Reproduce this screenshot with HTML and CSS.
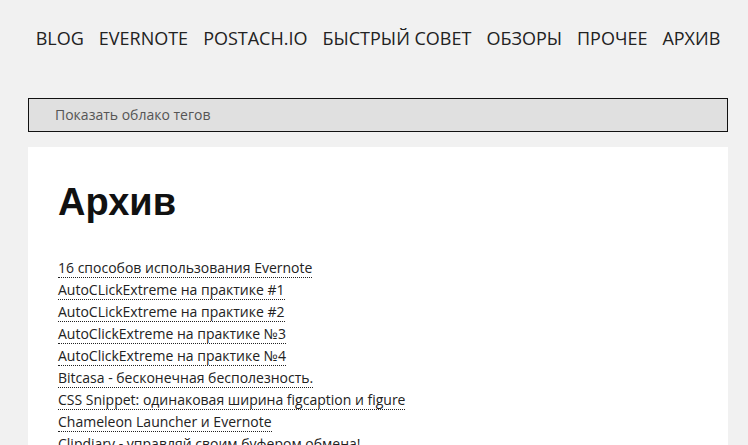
FILE: index.html
```html
<!DOCTYPE html>
<html lang="ru">
<head>
<meta charset="utf-8">
<title>Архив</title>
<link rel="stylesheet" href="styles.css">
</head>
<body>
<div class="wrap">
  <nav class="nav">
    <a href="#">BLOG</a>
    <a href="#">EVERNOTE</a>
    <a href="#">POSTACH.IO</a>
    <a href="#">БЫСТРЫЙ СОВЕТ</a>
    <a href="#">ОБЗОРЫ</a>
    <a href="#">ПРОЧЕЕ</a>
    <a href="#">АРХИВ</a>
  </nav>
  <div class="tags">Показать облако тегов</div>
  <main class="card">
    <h1 class="title">Архив</h1>
    <ul class="list">
      <li><a href="#">16 способов использования Evernote</a></li>
      <li><a href="#">AutoCLickExtreme на практике #1</a></li>
      <li><a href="#">AutoCLickExtreme на практике #2</a></li>
      <li><a href="#">AutoClickExtreme на практике №3</a></li>
      <li><a href="#">AutoClickExtreme на практике №4</a></li>
      <li><a href="#">Bitcasa - бесконечная бесполезность.</a></li>
      <li><a href="#">CSS Snippet: одинаковая ширина figcaption и figure</a></li>
      <li><a href="#">Chameleon Launcher и Evernote</a></li>
      <li><a href="#">Clipdiary - управляй своим буфером обмена!</a></li>
    </ul>
  </main>
</div>
</body>
</html>
```
FILE: styles.css
```css
html, body {
  margin: 0;
  padding: 0;
  background: #f1f1f1;
  font-family: "Open Sans", "Noto Sans", sans-serif;
  color: #222;
  overflow: hidden;
}
.wrap {
  width: 700px;
  margin-left: 28px;
}
.nav {
  display: flex;
  justify-content: center;
  gap: 15px;
  padding-top: 26px;
  height: 98px;
  box-sizing: border-box;
  font-size: 18px;
  line-height: 24px;
}
.nav a {
  color: #222;
  text-decoration: none;
}
.tags {
  border: 1px solid #111;
  background: #e0e0e0;
  height: 32px;
  line-height: 32px;
  padding-left: 26px;
  font-size: 14px;
  color: #555;
}
.card {
  margin-top: 15px;
  background: #fff;
  padding: 33px 30px 40px;
}
.title {
  margin: 0 0 33px;
  font-family: "Liberation Sans", Arial, sans-serif;
  font-weight: bold;
  font-size: 38px;
  line-height: 44px;
  color: #111;
}
.list {
  list-style: none;
  margin: 0;
  padding: 0;
  font-size: 14px;
  line-height: 22px;
}
.list a {
  color: #222;
  text-decoration: none;
  border-bottom: 1px dotted #222;
}
```
